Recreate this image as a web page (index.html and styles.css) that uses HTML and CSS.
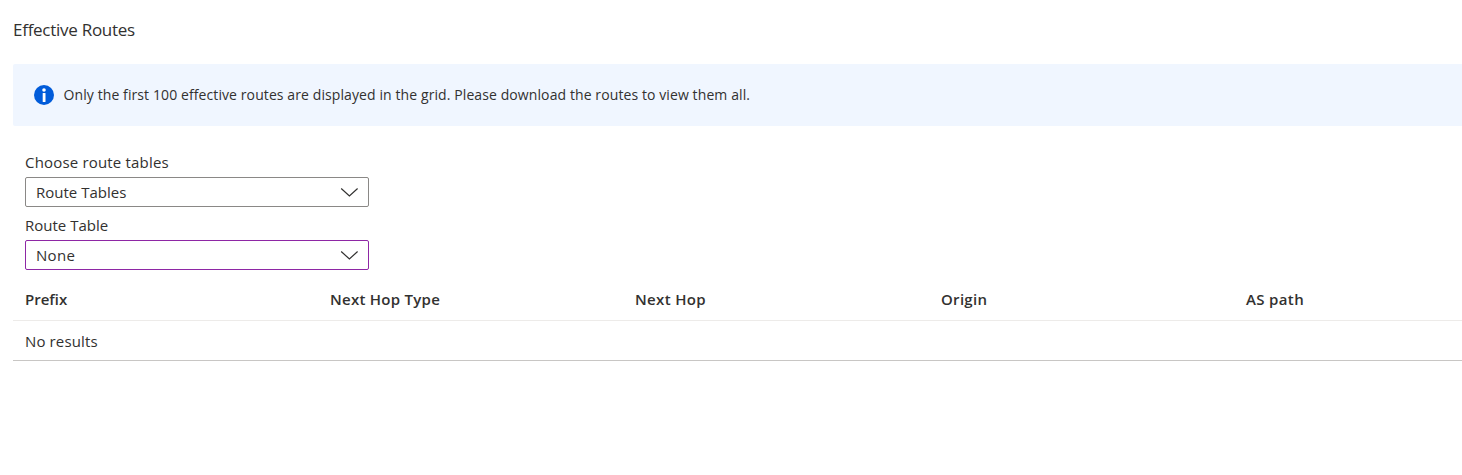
FILE: index.html
```html
<!DOCTYPE html>
<html lang="en">
<head>
<meta charset="utf-8">
<title>Effective Routes</title>
<link rel="stylesheet" href="styles.css">
</head>
<body>
<main class="page">
<h1 class="title"><span class="t-title">Effective Routes</span></h1>
<div class="banner">
<svg class="info" viewBox="0 0 20 20"><circle cx="10" cy="10" r="10" fill="#015cda"/><circle cx="10" cy="5" r="1.8" fill="#fff"/><rect x="8.7" y="8" width="2.8" height="9" rx=".5" fill="#fff"/></svg>
<span class="t-banner">Only the first 100 effective routes are displayed in the grid. Please download the routes to view them all.</span>
</div>
<section class="filters">
<label class="label"><span class="t-choose">Choose route tables</span></label>
<div class="select"><span class="t-tables">Route Tables</span><svg class="chevron" viewBox="0 0 18 10"><path d="M1.2 1.5l8.2 7.5 8.2-7.5"/></svg></div>
<label class="label second"><span class="t-table">Route Table</span></label>
<div class="select active"><span class="t-none">None</span><svg class="chevron" viewBox="0 0 18 10"><path d="M1.2 1.5l8.2 7.5 8.2-7.5"/></svg></div>
</section>
<div class="grid">
<div class="head"><span class="t-prefix">Prefix</span><span class="t-type">Next Hop Type</span><span class="t-hop">Next Hop</span><span class="t-origin">Origin</span><span class="t-as">AS path</span></div>
<div class="empty"><span class="t-empty">No results</span></div>
</div>
</main>
</body>
</html>
```
FILE: styles.css
```css
* { box-sizing: border-box; }
body { margin: 0; background: #fff; color: #323130; font: 15px/20px "Open Sans", "Noto Sans", sans-serif; white-space: nowrap; overflow: hidden; }
.page { padding-left: 13px; }
.title { margin: 0; height: 64px; padding-top: 20px; font-size: 17px; line-height: 20px; font-weight: 400; letter-spacing: -.27px; }
.banner { height: 62px; background: #f0f6ff; border-radius: 2px 0 0 2px; display: flex; align-items: center; padding-left: 21px; gap: 9.5px; font-size: 14px; letter-spacing: .096px; }
.info { width: 20px; height: 20px; flex: none; }
.filters { padding: 26px 0 0 12px; }
.label { display: block; height: 25px; line-height: 21px; }
.second { margin-top: 8px; }
.t-choose { letter-spacing: .18px; }
.t-none { letter-spacing: .3px; }
.select { width: 344px; height: 30px; border: 1px solid #8a8886; border-radius: 2px; padding: 0 10px; display: flex; align-items: center; justify-content: space-between; }
.active { border-color: #8e27a5; }
.chevron { width: 18px; height: 10px; fill: none; stroke: #323130; stroke-width: 1.2; }
.grid { margin-top: 10px; }
.head { height: 41px; padding: 9px 0 0 12px; display: grid; grid-template-columns: 305px 305px 306px 305px 1fr; font-weight: 600; border-bottom: 1px solid #edebe9; }
.t-type { letter-spacing: .27px; }
.t-hop { letter-spacing: .35px; }
.t-origin { letter-spacing: .3px; }
.t-as { letter-spacing: .35px; }
.empty { height: 40px; padding: 10px 0 0 12px; border-bottom: 1px solid #c8c6c4; }
.t-empty { letter-spacing: .13px; }
```
